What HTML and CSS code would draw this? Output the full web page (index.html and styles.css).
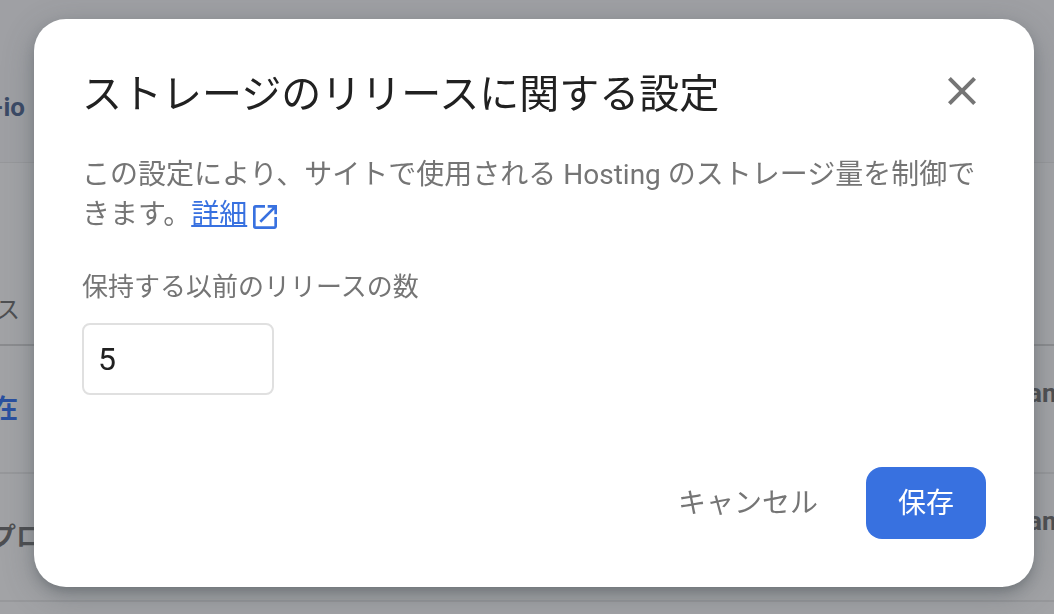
FILE: index.html
```html
<!DOCTYPE html>
<html lang="ja">
<head>
<meta charset="utf-8">
<meta name="viewport" content="width=device-width, initial-scale=1">
<title>ストレージのリリースに関する設定</title>
<link rel="stylesheet" href="styles.css">
</head>
<body>
<main class="page" aria-hidden="true">
  <div class="row site"><span class="start wide">-io</span></div>
  <div class="row heading"><span class="start">ス</span></div>
  <div class="row release"><span class="start current">在</span><span class="end">am</span></div>
  <div class="row release"><span class="start over">プロ</span><span class="end">am</span></div>
  <div class="row rest"></div>
</main>
<div class="overlay">
  <form class="dialog" role="dialog" aria-modal="true" aria-labelledby="title">
    <header class="top">
      <h1 class="title" id="title">ストレージのリリースに関する設定</h1>
      <button class="close" type="button" aria-label="閉じる">
        <svg width="48" height="48" viewBox="0 0 24 24"><path d="M19 6.41 17.59 5 12 10.59 6.41 5 5 6.41 10.59 12 5 17.59 6.41 19 12 13.41 17.59 19 19 17.59 13.41 12z" fill="#757575"/></svg>
      </button>
    </header>
    <p class="text">この設定により、サイトで使用される Hosting のストレージ量を制御できます。<a class="link" href="#"><span class="linktext">詳細</span><svg class="external" width="32" height="32" viewBox="0 0 24 24"><path d="M19 19H5V5h7V3H5a2 2 0 0 0-2 2v14a2 2 0 0 0 2 2h14c1.100 0 2-.900 2-2v-7h-2v7zM14 3v2h3.590l-9.830 9.830 1.410 1.410L19 6.410V10h2V3h-7z" fill="#3871e0"/></svg></a></p>
    <label class="label" for="count">保持する以前のリリースの数</label>
    <input class="count" id="count" type="text" inputmode="numeric" value="5">
    <footer class="actions">
      <button class="button" type="button">キャンセル</button>
      <button class="button primary" type="submit">保存</button>
    </footer>
  </form>
</div>
</body>
</html>
```
FILE: styles.css
```css
* {
  box-sizing: border-box;
}

body {
  margin: 0;
  font-family: Roboto, "Noto Sans CJK JP", sans-serif;
  background: #9fa0a4;
}

.page {
  display: flex;
  flex-direction: column;
  height: 100vh;
  overflow: hidden;
  font-size: 26px;
  line-height: 32px;
  color: #4e4f52;
}

.row {
  display: flex;
  flex: none;
  align-items: center;
  justify-content: space-between;
  background: #a2a3a6;
}

.site {
  height: 163px;
  padding-top: 52px;
  background: #9fa0a4;
  border-bottom: 1px solid #97989b;
  color: #3b4a66;
  font-weight: 700;
}

.heading {
  height: 183px;
  padding-top: 112px;
  border-bottom: 2px solid #8b8c8f;
  font-size: 24px;
  font-weight: 400;
}

.release {
  height: 128px;
  border-bottom: 2px solid #97989b;
  font-weight: 700;
}

.rest {
  flex: 1;
}

.start {
  display: flex;
  justify-content: flex-end;
  width: 20px;
  white-space: nowrap;
}

.wide {
  width: 25px;
}

.over {
  width: 42px;
}

.current {
  width: 18px;
  color: #2a50a0;
}

.end {
  width: 26px;
  padding-bottom: 32px;
  overflow: hidden;
}

.overlay {
  position: fixed;
  inset: 0;
  display: flex;
  align-items: flex-start;
  padding: 19px 20px 27px 34px;
}

.dialog {
  display: flex;
  flex: 1;
  flex-direction: column;
  align-items: flex-start;
  padding: 48px;
  border-radius: 32px;
  background: #fff;
  box-shadow: 0 6px 12px -2px rgba(60, 70, 75, 0.35), 0 8px 32px rgba(60, 70, 75, 0.3);
}

.top {
  display: flex;
  align-items: flex-start;
  justify-content: space-between;
  align-self: stretch;
}

.title {
  margin: 0;
  padding-top: 4px;
  font-size: 40px;
  font-weight: 400;
  line-height: 48px;
  color: #212121;
}

.close {
  display: flex;
  padding: 0;
  border: 0;
  background: none;
}

.text {
  margin: 36px 0 0;
  font-size: 28px;
  font-weight: 400;
  line-height: 40px;
  color: #757575;
}

.link {
  color: #3871e0;
  text-decoration: none;
}

.linktext {
  text-decoration: underline;
  text-decoration-thickness: 2px;
}

.external {
  margin-left: 2px;
  vertical-align: middle;
}

.label {
  margin-top: 32px;
  font-size: 26px;
  font-weight: 400;
  line-height: 40px;
  color: #757575;
}

.count {
  width: 192px;
  height: 72px;
  margin-top: 16px;
  padding: 0 14px;
  border: 2px solid #e0e0e0;
  border-radius: 8px;
  background: #fff;
  font: 400 32px Roboto, sans-serif;
  color: #212121;
}

.actions {
  display: flex;
  align-self: flex-end;
  gap: 16px;
  margin-top: 72px;
}

.button {
  height: 72px;
  padding: 0 32px 4px;
  border: 0;
  border-radius: 16px;
  background: none;
  font-family: inherit;
  font-size: 28px;
  font-weight: 400;
  color: #757575;
}

.primary {
  background: #3871e0;
  color: #fff;
}
```
